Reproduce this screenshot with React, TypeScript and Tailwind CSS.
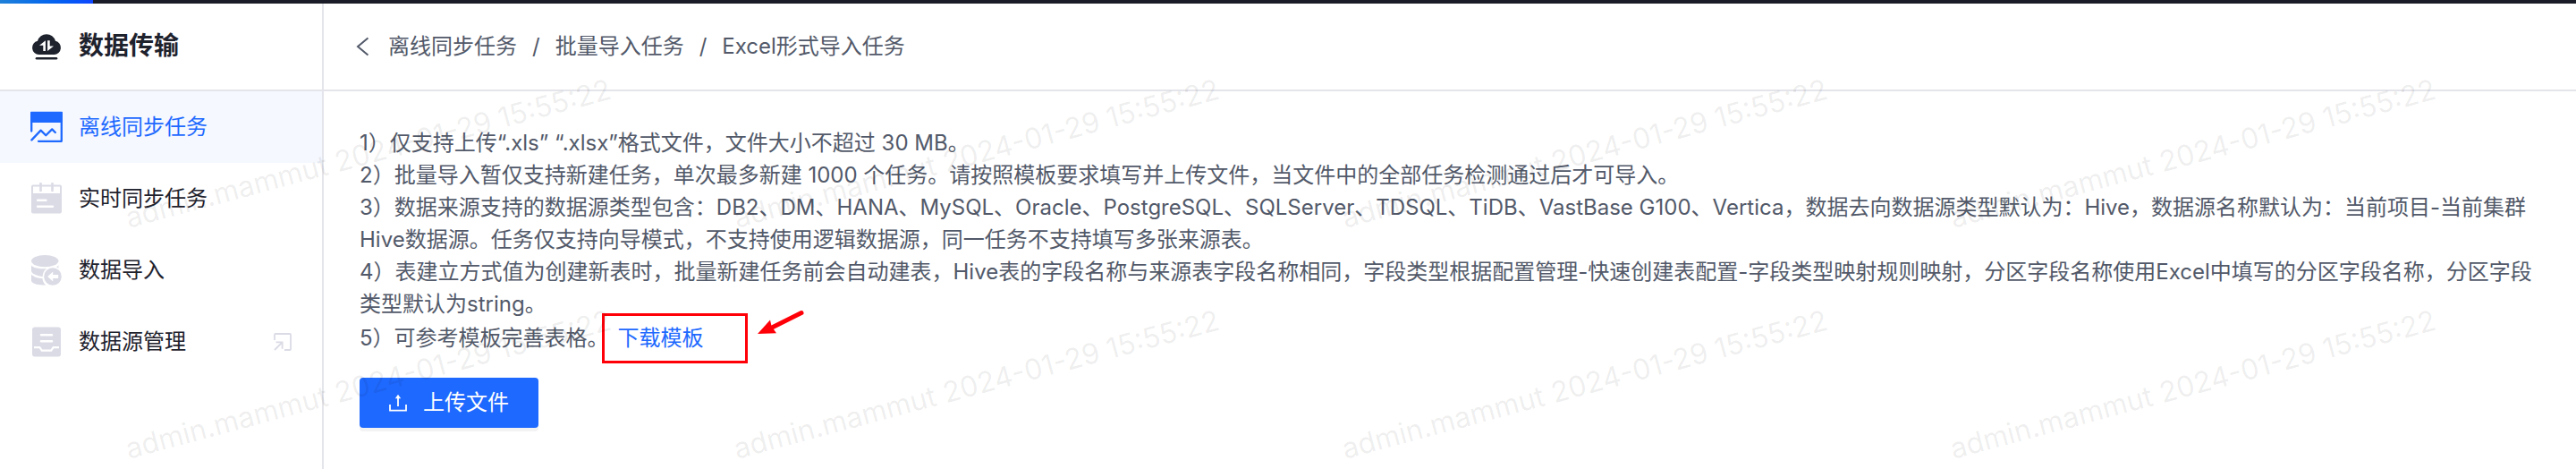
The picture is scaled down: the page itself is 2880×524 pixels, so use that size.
import type { ReactNode } from 'react';
import clsx from 'clsx';

const menu = [
  { label: '离线同步任务', icon: <OfflineIcon />, active: true },
  { label: '实时同步任务', icon: <RealtimeIcon /> },
  { label: '数据导入', icon: <ImportIcon /> },
  { label: '数据源管理', icon: <SourceIcon />, external: true },
];

const crumbs = ['离线同步任务', '批量导入任务', 'Excel形式导入任务'];

const tips = [
  '1）仅支持上传“.xls” “.xlsx”格式文件，文件大小不超过 30 MB。',
  '2）批量导入暂仅支持新建任务，单次最多新建 1000 个任务。请按照模板要求填写并上传文件，当文件中的全部任务检测通过后才可导入。',
  '3）数据来源支持的数据源类型包含：DB2、DM、HANA、MySQL、Oracle、PostgreSQL、SQLServer、TDSQL、TiDB、VastBase G100、Vertica，数据去向数据源类型默认为：Hive，数据源名称默认为：当前项目-当前集群Hive数据源。任务仅支持向导模式，不支持使用逻辑数据源，同一任务不支持填写多张来源表。',
  '4）表建立方式值为创建新表时，批量新建任务前会自动建表，Hive表的字段名称与来源表字段名称相同，字段类型根据配置管理-快速创建表配置-字段类型映射规则映射，分区字段名称使用Excel中填写的分区字段名称，分区字段类型默认为string。',
];

function Icon({ children }: { children: ReactNode }) {
  return (
    <svg viewBox="0 0 36 36" className="size-9 shrink-0" fill="none" aria-hidden="true">
      {children}
    </svg>
  );
}

function CloudIcon() {
  return (
    <Icon>
      <path
        d="M9.5 27A7.7 7.7 0 0 1 8 11.8a10.4 10.4 0 0 1 20 0A7.7 7.7 0 0 1 26.5 27z"
        fill="#1e222d"
      />
      <path d="M7 31.2h22" stroke="#1e222d" strokeWidth="2.6" strokeLinecap="round" />
      <path d="M16.9 11.2V23h-2.6v-6.2H10zM19.1 23V11.2h2.6v6.4H26z" fill="#fff" />
    </Icon>
  );
}

function OfflineIcon() {
  return (
    <Icon>
      <path d="M0 1.5Q0 .7 .8 .7h34.4q.8 0 .8.8V13H0z" fill="#1e69ff" />
      <g stroke="#1e69ff" strokeWidth="2.3" strokeLinecap="round" strokeLinejoin="round">
        <path d="M1.2 12v10.6M9 33.8h25.8V12" />
        <path d="M1.4 32.4 11.6 21.6l5.7 5.6 6.9-6.8 3.6 3.6" />
      </g>
    </Icon>
  );
}

function RealtimeIcon() {
  return (
    <Icon>
      <rect x="1" y="2.5" width="34" height="32" rx="2" fill="#dadbe5" />
      <path d="M3 4.5h30v7.5H3z" fill="#fff" />
      <path d="M11.5 1v8M24.5 1v8" stroke="#dadbe5" strokeWidth="2.6" strokeLinecap="round" />
      <path d="M8 19.8h9.5M8 26.8h17" stroke="#fff" strokeWidth="2.4" strokeLinecap="round" />
    </Icon>
  );
}

function ImportIcon() {
  return (
    <Icon>
      <g fill="#dadbe5">
        <ellipse cx="16.2" cy="7.6" rx="15.2" ry="6.6" />
        <path d="M1 12.4C5 17.6 27 17.6 31.4 12.4v8H16l-2 4.6C8 24.6 1 22 1 18.6z" />
        <path d="M1 22.4c3 3.4 8 4.4 12.4 4.6.3 3 1.6 5.6 3.8 7.4C9 35 1 33 1 29.6z" />
      </g>
      <circle cx="25" cy="25" r="11.4" fill="#fff" />
      <circle cx="25" cy="25" r="9.8" fill="#dadbe5" />
      <path d="m19.2 25 6-5.6v3.7h6v3.8h-6v3.7z" fill="#fff" />
    </Icon>
  );
}

function SourceIcon() {
  return (
    <Icon>
      <rect x="2" y="1.5" width="32" height="33" rx="3" fill="#dadbe5" />
      <path d="M12 10.3h12M12 17.3h12" stroke="#fff" strokeWidth="2.6" strokeLinecap="round" />
      <path d="M4 24.2h6.4l2.4 3.4h10.4l2.4-3.4H32" stroke="#fff" strokeWidth="2.2" />
    </Icon>
  );
}

function ExternalIcon() {
  return (
    <svg viewBox="0 0 20 20" className="size-5" fill="none" stroke="#dadbe5" strokeWidth="1.8" aria-hidden="true">
      <path d="M1 8V2q0-1 1-1h16q1 0 1 1v16q0 1-1 1h-6" />
      <path d="m1 19 8.6-8.6M2.6 10.4h7v7.4" />
    </svg>
  );
}

function Watermark() {
  return (
    <svg className="pointer-events-none absolute inset-0 size-full" aria-hidden="true">
      {[255, 513].map((y) =>
        [144, 824, 1504, 2184].map((x) => (
          <text
            key={`${x}-${y}`}
            transform={`translate(${x} ${y}) rotate(-15)`}
            className="fill-black/7 text-[32px]"
          >
            admin.mammut 2024-01-29 15:55:22
          </text>
        ))
      )}
    </svg>
  );
}

function Sidebar() {
  return (
    <aside className="w-[362px] shrink-0 border-r-2 border-[#e4e5eb]">
      <div className="flex h-[98px] items-center gap-[18px] border-b-2 border-[#e4e5eb] pl-[34px]">
        <CloudIcon />
        <h1 className="text-[28px] font-bold text-[#1e222d]">数据传输</h1>
      </div>
      <nav>
        {menu.map((item) => (
          <a
            key={item.label}
            href="#"
            className={clsx(
              'flex h-20 items-center gap-[18px] px-[34px]',
              item.active ? 'bg-[#f5f8ff] text-[#1e69ff]' : 'text-[#1e222d]'
            )}
          >
            {item.icon}
            <span className="flex-1">{item.label}</span>
            {item.external && <ExternalIcon />}
          </a>
        ))}
      </nav>
    </aside>
  );
}

function Breadcrumb() {
  return (
    <header className="flex h-[98px] items-center border-b-2 border-[#e4e5eb] pl-9">
      <button type="button" aria-label="返回" className="mr-[22px]">
        <svg viewBox="0 0 14 22" className="h-[22px] w-[14px]" fill="none" stroke="currentColor" strokeWidth="2">
          <path d="M13.4 1.4 2 11l11.4 9.6" />
        </svg>
      </button>
      <nav className="flex gap-[17px]">
        {crumbs.map((crumb, i) => (
          <span key={crumb} className="flex gap-[17px]">
            {i > 0 && <span>/</span>}
            <a href="#">{crumb}</a>
          </span>
        ))}
      </nav>
    </header>
  );
}

export default function App() {
  return (
    <div className="relative min-h-screen overflow-hidden bg-white font-[Inter,'Noto_Sans_CJK_SC',sans-serif] text-2xl text-[#525969]">
      <div className="h-1 bg-[#1a1d27]">
        <div className="h-1 w-[104px] bg-linear-to-r from-[#1f80d8] to-[#0f45ff]" />
      </div>
      <div className="flex min-h-[calc(100vh-4px)]">
        <Sidebar />
        <main className="min-w-0 flex-1">
          <Breadcrumb />
          <div className="px-10 pt-10">
            <div className="leading-9">
              {tips.map((tip) => (
                <p key={tip}>{tip}</p>
              ))}
              <p className="leading-10">
                5）可参考模板完善表格。
                <span className="relative ml-2.5 inline-block">
                  <a href="#" className="text-[#1e69ff]">
                    下载模板
                  </a>
                  {/* callout around the download link */}
                  <span className="pointer-events-none absolute -top-2 -left-[18px] h-14 w-[163px] border-3 border-[#ff0008]" />
                  <svg
                    viewBox="0 0 54 32"
                    className="pointer-events-none absolute -top-3 left-[156px] h-8 w-[54px]"
                    aria-hidden="true"
                  >
                    <path d="M49 3.5 14 21" stroke="#ff0008" strokeWidth="5" strokeLinecap="round" />
                    <path d="M0 27 14 11.5l1.6 7.1 5.4 7.6z" fill="#ff0008" />
                  </svg>
                </span>
              </p>
            </div>
            <button
              type="button"
              className="mt-6 flex h-14 w-[200px] items-center justify-center gap-[18px] rounded bg-[#1e69ff] text-white shadow-[0_4px_0_#f3f3f3]"
            >
              <svg viewBox="0 0 20 20" className="size-5" fill="none" stroke="currentColor" strokeWidth="1.8" aria-hidden="true">
                <path d="M1 12v6.6h18V12M10 14V2.5" />
                <path d="M6.8 5.2 10 .8l3.2 4.4z" fill="currentColor" stroke="none" />
              </svg>
              上传文件
            </button>
          </div>
        </main>
      </div>
      <Watermark />
    </div>
  );
}
